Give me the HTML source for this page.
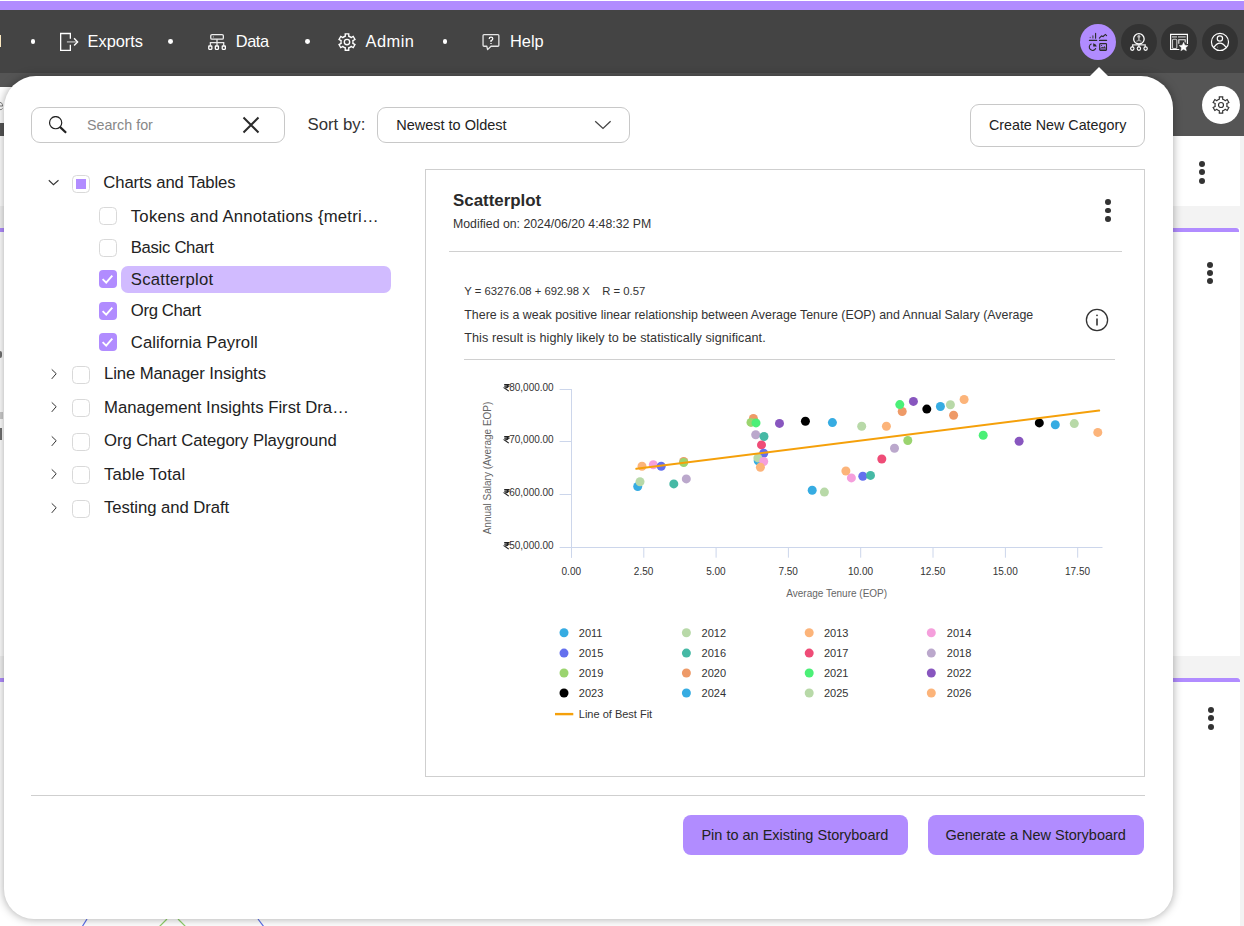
<!DOCTYPE html>
<html><head><meta charset="utf-8"><style>
html,body{margin:0;padding:0;}
body{width:1244px;height:926px;overflow:hidden;position:relative;font-family:"Liberation Sans", sans-serif;background:#fff}
.t{position:absolute;white-space:nowrap;}
</style></head><body>
<div style="position:absolute;left:0px;top:0px;width:1244px;height:926px;background:#fff"></div><div style="position:absolute;left:0px;top:1px;width:1244px;height:9px;background:#b18cff"></div><div style="position:absolute;left:0px;top:10px;width:1244px;height:63px;background:#444"></div><div style="position:absolute;left:0px;top:73px;width:1244px;height:63px;background:#555"></div><div style="position:absolute;left:0px;top:87px;width:24px;height:36px;background:#fff"></div><div style="position:absolute;left:0px;top:206px;width:1244px;height:22px;background:#f3f3f3"></div><div style="position:absolute;left:0px;top:228px;width:1239px;height:4px;background:#b18cff;border-radius:0 3px 0 0"></div><div style="position:absolute;left:0px;top:656px;width:1244px;height:22px;background:#f3f3f3"></div><div style="position:absolute;left:0px;top:678px;width:1239.5px;height:4px;background:#b18cff;border-radius:0 3px 0 0"></div><div style="position:absolute;left:1240px;top:136px;width:4px;height:790px;background:#f3f3f3"></div><div style="position:absolute;left:1199.20px;top:160.80px;width:6px;height:6px;border-radius:50%;background:#333"></div><div style="position:absolute;left:1199.20px;top:169.20px;width:6px;height:6px;border-radius:50%;background:#333"></div><div style="position:absolute;left:1199.20px;top:177.60px;width:6px;height:6px;border-radius:50%;background:#333"></div><div style="position:absolute;left:1206.90px;top:261.60px;width:6px;height:6px;border-radius:50%;background:#333"></div><div style="position:absolute;left:1206.90px;top:270.00px;width:6px;height:6px;border-radius:50%;background:#333"></div><div style="position:absolute;left:1206.90px;top:278.40px;width:6px;height:6px;border-radius:50%;background:#333"></div><div style="position:absolute;left:1208.00px;top:706.70px;width:6px;height:6px;border-radius:50%;background:#333"></div><div style="position:absolute;left:1208.00px;top:715.10px;width:6px;height:6px;border-radius:50%;background:#333"></div><div style="position:absolute;left:1208.00px;top:723.50px;width:6px;height:6px;border-radius:50%;background:#333"></div><div style="position:absolute;left:1202px;top:86px;width:38px;height:38px;background:#fff;border-radius:50%"></div><svg style="position:absolute;left:1212px;top:96px" width="18" height="18" viewBox="0 0 18 18" fill="none" stroke="#333" stroke-width="1.2"><path d="M7.30 3.25L7.30 0.90L10.70 0.90L10.70 3.25A6.0 6.0 0 0 1 13.13 4.65L15.16 3.48L16.86 6.42L14.83 7.60A6.0 6.0 0 0 1 14.83 10.40L16.86 11.58L15.16 14.52L13.13 13.35A6.0 6.0 0 0 1 10.70 14.75L10.70 17.10L7.30 17.10L7.30 14.75A6.0 6.0 0 0 1 4.87 13.35L2.84 14.52L1.14 11.58L3.17 10.40A6.0 6.0 0 0 1 3.17 7.60L1.14 6.42L2.84 3.48L4.87 4.65A6.0 6.0 0 0 1 7.30 3.25Z"/><circle cx="9" cy="9" r="2.5"/></svg><svg style="position:absolute;left:-4px;top:101px" width="8" height="10"><path d="M1 5H6.8M6.6 5C6.6 2.5 5.3 1.5 4 1.5S1.2 2.5 1.2 5 2.6 8.6 4.2 8.6 6.2 8 6.6 7.4" fill="none" stroke="#777" stroke-width="1"/></svg><div style="position:absolute;left:0px;top:351px;width:2px;height:7px;background:#333;border-radius:0 4px 4px 0;opacity:.7"></div><div style="position:absolute;left:0px;top:412px;width:2.5px;height:7px;background:#999;opacity:.5"></div><div style="position:absolute;left:0px;top:428px;width:1.8px;height:12px;background:#333;opacity:.7"></div><svg style="position:absolute;left:0;top:900px" width="400" height="26"><g stroke-width="1.2" fill="none"><path d="M87 19 L82 27" stroke="#5a6ee8"/><path d="M167 19 L159 27" stroke="#8fcf6a"/><path d="M178 19 L186 27" stroke="#8fcf6a"/><path d="M258 19 L264 27" stroke="#5a6ee8"/></g></svg><div style="position:absolute;left:30.60px;top:38.90px;width:4.8px;height:4.8px;border-radius:50%;background:#fff"></div><div style="position:absolute;left:168.00px;top:38.90px;width:4.8px;height:4.8px;border-radius:50%;background:#fff"></div><div style="position:absolute;left:305.00px;top:38.90px;width:4.8px;height:4.8px;border-radius:50%;background:#fff"></div><div style="position:absolute;left:442.50px;top:38.90px;width:4.8px;height:4.8px;border-radius:50%;background:#fff"></div><div class="t" style="left:87.50px;top:30.52px;font-size:16.4px;line-height:21px;color:#fff;font-weight:400;">Exports</div><div class="t" style="left:235.80px;top:30.52px;font-size:16.4px;line-height:21px;color:#fff;font-weight:400;letter-spacing:-0.45px">Data</div><div class="t" style="left:365.60px;top:30.52px;font-size:16.4px;line-height:21px;color:#fff;font-weight:400;letter-spacing:0.45px">Admin</div><div class="t" style="left:510.00px;top:30.52px;font-size:16.4px;line-height:21px;color:#fff;font-weight:400;">Help</div><div style="position:absolute;left:0px;top:35px;width:1.2px;height:12px;background:#fbe8c0"></div><svg style="position:absolute;left:59px;top:32px" width="21" height="21" viewBox="0 0 21 21" fill="none" stroke="#fff" stroke-width="1.3"><path d="M11.35 6.8V1.5H1.65V18.35H11.35V12.8"/><path d="M7.9 9.9H17.6" stroke="#b0b0b0" stroke-width="1.4"/><path d="M15.1 6.3L18.6 9.9L15.1 13.5" stroke-width="1.4"/></svg><svg style="position:absolute;left:206px;top:32px" width="22" height="20" viewBox="0 0 22 20" fill="none" stroke="#fff" stroke-width="1.3"><rect x="4.75" y="2.55" width="12.6" height="4.65" rx="1.3" stroke="#eee"/><rect x="6.9" y="4.1" width="1" height="1.6" fill="#999" stroke="none"/><path d="M11 7.2V10.7M4.4 13.8V10.7H17.7V13.8M11 10.7V13.8" stroke="#e8e8e8"/><rect x="2.75" y="14" width="3.1" height="3.35" rx="0.5"/><rect x="9.35" y="14" width="3.1" height="3.35" rx="0.5"/><rect x="16.25" y="14" width="3.1" height="3.35" rx="0.5"/></svg><svg style="position:absolute;left:338px;top:32.8px" width="18" height="18" viewBox="0 0 18 18" fill="none" stroke="#fff" stroke-width="1.35"><path d="M7.25 3.26L7.25 0.80L10.75 0.80L10.75 3.26A6.0 6.0 0 0 1 13.10 4.61L15.23 3.38L16.98 6.42L14.85 7.65A6.0 6.0 0 0 1 14.85 10.35L16.98 11.58L15.23 14.62L13.10 13.39A6.0 6.0 0 0 1 10.75 14.74L10.75 17.20L7.25 17.20L7.25 14.74A6.0 6.0 0 0 1 4.90 13.39L2.77 14.62L1.02 11.58L3.15 10.35A6.0 6.0 0 0 1 3.15 7.65L1.02 6.42L2.77 3.38L4.90 4.61A6.0 6.0 0 0 1 7.25 3.26Z"/><circle cx="9" cy="9" r="2.7"/></svg><svg style="position:absolute;left:481px;top:32px" width="20" height="20" viewBox="0 0 20 20" fill="none" stroke="#e6e6e6" stroke-width="1.3"><path d="M2.05 3.5Q2.05 2.55 3 2.55H16.9Q17.85 2.55 17.85 3.5V13.3Q17.85 14.25 16.9 14.25H10L6.6 17.6L5.8 14.25H3Q2.05 14.25 2.05 13.3Z" stroke-linejoin="round"/><path d="M8.2 6.9Q8.2 5.1 10 5.1Q11.8 5.1 11.8 6.8Q11.8 8 10 8.6V9.9" stroke="#fff" stroke-width="1.25"/><path d="M9.2 11.5H10.8" stroke="#ddd" stroke-width="1.1"/></svg><div style="position:absolute;left:1080px;top:24px;width:36px;height:36px;background:#b18cff;border-radius:50%"></div><div style="position:absolute;left:1121px;top:24px;width:36px;height:36px;background:#333;border-radius:50%"></div><div style="position:absolute;left:1161px;top:24px;width:36px;height:36px;background:#333;border-radius:50%"></div><div style="position:absolute;left:1202px;top:24px;width:36px;height:36px;background:#333;border-radius:50%"></div><svg style="position:absolute;left:1088px;top:32px" width="20" height="20" viewBox="0 0 20 20" fill="none" stroke="#2b2b2b" stroke-linecap="round"><path d="M1.4 8.4H8.7M11.5 8.4H18.6" stroke-width="1.15"/><path d="M2.2 5.2V5.6" stroke-width="1.1" stroke="#555"/><path d="M4.9 3.8V6" stroke-width="1.1" stroke="#444"/><path d="M7.6 1.4V6.3" stroke-width="1.1"/><path d="M11.4 6.2L13.5 3.9L15.1 4.5L17.4 2.4L18.6 3.6" stroke-width="1.1"/><path d="M3.18 12.06A3.35 3.35 0 1 0 7.64 16.52" stroke-width="1.1"/><path d="M5.2 11.3V14.5H8.8Q8.4 12 5.2 11.3Z" fill="#2b2b2b" stroke="none"/><rect x="11.7" y="11.6" width="6.8" height="6.8" rx="0.6" stroke-width="1.1"/><path d="M12.3 17H18" stroke-width="0.9"/><circle cx="13.6" cy="13.5" r="0.6" fill="#2b2b2b" stroke="none"/><path d="M12.4 16.1L14.3 14.8L15.3 15.4L16.4 13.9L17.8 16.1Z" fill="#3a3a3a" stroke="none"/></svg><svg style="position:absolute;left:1129px;top:32px" width="20" height="20" viewBox="0 0 20 20" fill="none" stroke="#fff" stroke-width="1.3"><circle cx="9.9" cy="6.9" r="5.25"/><circle cx="9.9" cy="4.6" r="1.5" fill="#bdbdbd" stroke="none"/><path d="M9.9 5.8V8.3" stroke="#aaa" stroke-width="1.6"/><path d="M7.4 9.2Q9.9 7.9 12.4 9.2" stroke="#bbb" stroke-width="0.9"/><path d="M7.3 11.2Q9.9 13.3 12.5 11.2" stroke-width="1.6"/><path d="M3.6 15V12.9H16.2V15M9.9 12.2V15" stroke="#e6e6e6"/><circle cx="3.3" cy="16.6" r="1.7" stroke-width="1.15"/><circle cx="9.9" cy="16.6" r="1.7" stroke-width="1.15"/><circle cx="16.6" cy="16.6" r="1.7" stroke-width="1.15"/></svg><svg style="position:absolute;left:1169px;top:33px" width="21" height="19" viewBox="0 0 21 19" fill="none" stroke="#fff" stroke-width="1.2"><path d="M10.3 16.5H1.6V1.36H18.4V11"/><path d="M3 3.9H8M9 3.9H16.7" stroke="#9a9a9a" stroke-width="1.7"/><rect x="3.5" y="6.3" width="4.3" height="9.2" rx="1" stroke="#c8c8c8" stroke-width="1.1"/><path d="M9.8 10.8V6.8H16.2V9.6" stroke="#eee" stroke-width="1.1"/><path d="M14.60 8.00L16.30 11.65L20.31 12.15L17.36 14.90L18.13 18.85L14.60 16.90L11.07 18.85L11.84 14.90L8.89 12.15L12.90 11.65Z" fill="#333" stroke="none"/><path d="M14.60 9.30L15.89 12.22L19.07 12.55L16.69 14.68L17.36 17.80L14.60 16.20L11.84 17.80L12.51 14.68L10.13 12.55L13.31 12.22Z" fill="#fff" stroke="#fff" stroke-width="0.4" stroke-linejoin="round"/></svg><svg style="position:absolute;left:1210px;top:32px" width="20" height="20" viewBox="0 0 20 20" fill="none" stroke="#fff" stroke-width="1.2"><circle cx="9.98" cy="9.93" r="8.55"/><circle cx="9.9" cy="6.55" r="2.65"/><path d="M3.9 15.3Q9.9 6.9 16.1 15.3"/><circle cx="7.6" cy="15" r="0.55" fill="#aaa" stroke="none"/></svg><div style="position:absolute;left:4px;top:76px;width:1168.7px;height:843px;background:#fff;border-radius:32px 32px 30px 30px;box-shadow:0 0 10px rgba(0,0,0,0.35)"></div><svg style="position:absolute;left:1089px;top:66px" width="20" height="11"><path d="M0.5 10.5L10 1L19.5 10.5Z" fill="#fff"/></svg><div style="position:absolute;left:31px;top:107px;width:254px;height:36px;box-sizing:border-box;border:1px solid #c8c8c8;border-radius:9px;background:#fff"></div><svg style="position:absolute;left:47px;top:116px" width="21" height="19" viewBox="0 0 21 19" fill="none" stroke="#222" stroke-width="1.2"><circle cx="8.65" cy="6.65" r="6.1"/><path d="M12.9 10.9L19.1 16.8" stroke-width="2.2"/></svg><div class="t" style="left:86.90px;top:115.55px;font-size:14.3px;line-height:19px;color:#888;font-weight:400;">Search for</div><svg style="position:absolute;left:242px;top:116px" width="18" height="18" viewBox="0 0 18 18" stroke="#2b2b2b" stroke-width="2"><path d="M1.5 1.5L16.5 16.5M16.5 1.5L1.5 16.5"/></svg><div class="t" style="left:307.50px;top:113.98px;font-size:16.8px;line-height:22px;color:#333;font-weight:400;">Sort by:</div><div style="position:absolute;left:377px;top:107px;width:253px;height:36px;box-sizing:border-box;border:1px solid #c8c8c8;border-radius:9px;background:#fff"></div><div class="t" style="left:396.20px;top:116.28px;font-size:14.5px;line-height:19px;color:#222;font-weight:400;">Newest to Oldest</div><svg style="position:absolute;left:594px;top:120px" width="18" height="10" viewBox="0 0 18 10" fill="none" stroke="#454545" stroke-width="1.3"><path d="M1.2 1.2L9 8.4L16.6 1.2"/></svg><div style="position:absolute;left:970px;top:104px;width:175px;height:43px;box-sizing:border-box;border:1px solid #c8c8c8;border-radius:9px;background:#fff"></div><div class="t" style="left:988.90px;top:116.25px;font-size:14.3px;line-height:19px;color:#222;font-weight:400;">Create New Category</div><svg style="position:absolute;left:48px;top:179px" width="12" height="8" viewBox="0 0 12 8" fill="none" stroke="#333" stroke-width="1.05"><path d="M0.8 1.25L5.45 5.7L10.5 1.25"/></svg><div style="position:absolute;left:72px;top:175px;width:18px;height:18px;box-sizing:border-box;border:1px solid #d9d9d9;border-radius:4.5px;background:#fff"></div><div style="position:absolute;left:76px;top:179px;width:10px;height:10px;background:#b18cff"></div><div class="t" style="left:103.30px;top:171.91px;font-size:16.7px;line-height:22px;color:#222;font-weight:400;letter-spacing:-0.12px">Charts and Tables</div><div style="position:absolute;left:99px;top:207px;width:18px;height:18px;box-sizing:border-box;border:1px solid #d9d9d9;border-radius:4.5px;background:#fff"></div><div class="t" style="left:130.80px;top:205.81px;font-size:16.7px;line-height:22px;color:#222;font-weight:400;letter-spacing:0.23px">Tokens and Annotations {metri…</div><div style="position:absolute;left:99px;top:239px;width:18px;height:18px;box-sizing:border-box;border:1px solid #d9d9d9;border-radius:4.5px;background:#fff"></div><div class="t" style="left:130.80px;top:236.61px;font-size:16.7px;line-height:22px;color:#222;font-weight:400;letter-spacing:-0.31px">Basic Chart</div><div style="position:absolute;left:121px;top:266px;width:270px;height:27px;background:#d1bbff;border-radius:7px"></div><div style="position:absolute;left:99px;top:270px;width:18px;height:18px;border-radius:4px;background:#b18cff"></div><svg style="position:absolute;left:99px;top:270px" width="18" height="18" viewBox="0 0 18 18" fill="none" stroke="#fff" stroke-width="1.9"><path d="M3.6 9.1L7.2 12.6L13.3 5.6"/></svg><div class="t" style="left:130.80px;top:268.81px;font-size:16.7px;line-height:22px;color:#222;font-weight:400;letter-spacing:0.25px">Scatterplot</div><div style="position:absolute;left:99px;top:302px;width:18px;height:18px;border-radius:4px;background:#b18cff"></div><svg style="position:absolute;left:99px;top:302px" width="18" height="18" viewBox="0 0 18 18" fill="none" stroke="#fff" stroke-width="1.9"><path d="M3.6 9.1L7.2 12.6L13.3 5.6"/></svg><div class="t" style="left:130.80px;top:300.11px;font-size:16.7px;line-height:22px;color:#222;font-weight:400;letter-spacing:-0.35px">Org Chart</div><div style="position:absolute;left:99px;top:333px;width:18px;height:18px;border-radius:4px;background:#b18cff"></div><svg style="position:absolute;left:99px;top:333px" width="18" height="18" viewBox="0 0 18 18" fill="none" stroke="#fff" stroke-width="1.9"><path d="M3.6 9.1L7.2 12.6L13.3 5.6"/></svg><div class="t" style="left:130.80px;top:332.11px;font-size:16.7px;line-height:22px;color:#222;font-weight:400;letter-spacing:0.04px">California Payroll</div><svg style="position:absolute;left:49.5px;top:367.8px" width="8" height="12" viewBox="0 0 8 12" fill="none" stroke="#333" stroke-width="1.0"><path d="M1.73 1.4L6.2 5.65L1.73 10.9"/></svg><div style="position:absolute;left:72px;top:366px;width:18px;height:18px;box-sizing:border-box;border:1px solid #d9d9d9;border-radius:4.5px;background:#fff"></div><div class="t" style="left:104.00px;top:362.91px;font-size:16.7px;line-height:22px;color:#222;font-weight:400;letter-spacing:-0.11px">Line Manager Insights</div><svg style="position:absolute;left:49.5px;top:400.6px" width="8" height="12" viewBox="0 0 8 12" fill="none" stroke="#333" stroke-width="1.0"><path d="M1.73 1.4L6.2 5.65L1.73 10.9"/></svg><div style="position:absolute;left:72px;top:399px;width:18px;height:18px;box-sizing:border-box;border:1px solid #d9d9d9;border-radius:4.5px;background:#fff"></div><div class="t" style="left:104.00px;top:397.11px;font-size:16.7px;line-height:22px;color:#222;font-weight:400;letter-spacing:0px">Management Insights First Dra…</div><svg style="position:absolute;left:49.5px;top:434.7px" width="8" height="12" viewBox="0 0 8 12" fill="none" stroke="#333" stroke-width="1.0"><path d="M1.73 1.4L6.2 5.65L1.73 10.9"/></svg><div style="position:absolute;left:72px;top:433px;width:18px;height:18px;box-sizing:border-box;border:1px solid #d9d9d9;border-radius:4.5px;background:#fff"></div><div class="t" style="left:104.00px;top:429.71px;font-size:16.7px;line-height:22px;color:#222;font-weight:400;letter-spacing:-0.07px">Org Chart Category Playground</div><svg style="position:absolute;left:49.5px;top:467.7px" width="8" height="12" viewBox="0 0 8 12" fill="none" stroke="#333" stroke-width="1.0"><path d="M1.73 1.4L6.2 5.65L1.73 10.9"/></svg><div style="position:absolute;left:72px;top:466px;width:18px;height:18px;box-sizing:border-box;border:1px solid #d9d9d9;border-radius:4.5px;background:#fff"></div><div class="t" style="left:104.00px;top:463.71px;font-size:16.7px;line-height:22px;color:#222;font-weight:400;letter-spacing:0.17px">Table Total</div><svg style="position:absolute;left:49.5px;top:501.6px" width="8" height="12" viewBox="0 0 8 12" fill="none" stroke="#333" stroke-width="1.0"><path d="M1.73 1.4L6.2 5.65L1.73 10.9"/></svg><div style="position:absolute;left:72px;top:500px;width:18px;height:18px;box-sizing:border-box;border:1px solid #d9d9d9;border-radius:4.5px;background:#fff"></div><div class="t" style="left:104.00px;top:496.51px;font-size:16.7px;line-height:22px;color:#222;font-weight:400;letter-spacing:-0.06px">Testing and Draft</div><div style="position:absolute;left:425px;top:169px;width:720px;height:608px;box-sizing:border-box;border:1px solid #cfcfcf;background:#fff"></div><div class="t" style="left:453.00px;top:189.64px;font-size:16.9px;line-height:22px;color:#2a2a2a;font-weight:700;">Scatterplot</div><div class="t" style="left:453.00px;top:216.44px;font-size:12.3px;line-height:16px;color:#333;font-weight:400;">Modified on: 2024/06/20 4:48:32 PM</div><div style="position:absolute;left:1105.10px;top:198.90px;width:5.8px;height:5.8px;border-radius:50%;background:#333"></div><div style="position:absolute;left:1105.10px;top:207.50px;width:5.8px;height:5.8px;border-radius:50%;background:#333"></div><div style="position:absolute;left:1105.10px;top:216.10px;width:5.8px;height:5.8px;border-radius:50%;background:#333"></div><div style="position:absolute;left:449px;top:251px;width:673px;height:1px;background:#d0d0d0"></div><div class="t" style="left:464.30px;top:283.88px;font-size:11.3px;line-height:15px;color:#333;font-weight:400;">Y = 63276.08 + 692.98 X &nbsp;&nbsp; R = 0.57</div><div class="t" style="left:464.30px;top:307.40px;font-size:12.4px;line-height:16px;color:#333;font-weight:400;">There is a weak positive linear relationship between Average Tenure (EOP) and Annual Salary (Average</div><div class="t" style="left:464.30px;top:329.93px;font-size:12.6px;line-height:16px;color:#333;font-weight:400;letter-spacing:0.065px">This result is highly likely to be statistically significant.</div><svg style="position:absolute;left:1085px;top:308px" width="24" height="24" viewBox="0 0 24 24" fill="none" stroke="#333" stroke-width="1.3"><circle cx="12" cy="12" r="10.6"/><path d="M12 10.5V17.5" stroke-width="1.6"/><circle cx="12" cy="7.3" r="0.9" fill="#333" stroke="none"/></svg><div style="position:absolute;left:464px;top:359px;width:651px;height:1px;background:#d0d0d0"></div><svg style="position:absolute;left:0;top:0" width="1244" height="926" font-family="Liberation Sans, sans-serif"><path d="M571.5 389V557.7M559.6 389.5H571.5M559.6 441.5H571.5M559.6 494.5H571.5M559.6 547.5H1102.5" stroke="#ccd6eb" stroke-width="1" fill="none"/><path d="M571.5 547.5V557.7M643.8 547.5V557.7M716.1 547.5V557.7M788.4 547.5V557.7M860.7 547.5V557.7M933.0 547.5V557.7M1005.4 547.5V557.7M1077.7 547.5V557.7" stroke="#ccd6eb" stroke-width="1" fill="none"/><text x="553.7" y="391.10" font-size="10" fill="#333" text-anchor="end">80,000.00</text><path d="M504.20 384.69H509.58M504.20 386.26H509.58M504.50 384.69C509.31 384.69 509.31 387.99 504.50 387.99L508.77 391.10" stroke="#222" stroke-width="1.15" fill="none"/><text x="553.7" y="443.10" font-size="10" fill="#333" text-anchor="end">70,000.00</text><path d="M504.20 436.69H509.58M504.20 438.26H509.58M504.50 436.69C509.31 436.69 509.31 439.99 504.50 439.99L508.77 443.10" stroke="#222" stroke-width="1.15" fill="none"/><text x="553.7" y="496.10" font-size="10" fill="#333" text-anchor="end">60,000.00</text><path d="M504.20 489.69H509.58M504.20 491.26H509.58M504.50 489.69C509.31 489.69 509.31 492.99 504.50 492.99L508.77 496.10" stroke="#222" stroke-width="1.15" fill="none"/><text x="553.7" y="549.10" font-size="10" fill="#333" text-anchor="end">50,000.00</text><path d="M504.20 542.69H509.58M504.20 544.26H509.58M504.50 542.69C509.31 542.69 509.31 545.99 504.50 545.99L508.77 549.10" stroke="#222" stroke-width="1.15" fill="none"/><text x="571.3" y="574.9" font-size="10" fill="#333" text-anchor="middle">0.00</text><text x="643.6" y="574.9" font-size="10" fill="#333" text-anchor="middle">2.50</text><text x="715.9" y="574.9" font-size="10" fill="#333" text-anchor="middle">5.00</text><text x="788.2" y="574.9" font-size="10" fill="#333" text-anchor="middle">7.50</text><text x="860.5" y="574.9" font-size="10" fill="#333" text-anchor="middle">10.00</text><text x="932.8" y="574.9" font-size="10" fill="#333" text-anchor="middle">12.50</text><text x="1005.2" y="574.9" font-size="10" fill="#333" text-anchor="middle">15.00</text><text x="1077.5" y="574.9" font-size="10" fill="#333" text-anchor="middle">17.50</text><text x="836.7" y="597.2" font-size="10" fill="#666" text-anchor="middle">Average Tenure (EOP)</text><text transform="translate(491,468) rotate(-90)" x="0" y="0" font-size="10" fill="#666" text-anchor="middle">Annual Salary (Average EOP)</text><circle cx="637.7" cy="486.5" r="4.5" fill="#36ace2"/><circle cx="640" cy="481.8" r="4.5" fill="#b8d9a8"/><circle cx="642.0" cy="466.3" r="4.5" fill="#fcb47a"/><circle cx="653.3" cy="464.8" r="4.5" fill="#f59fdc"/><circle cx="661.2" cy="466.3" r="4.5" fill="#6470ee"/><circle cx="683.7" cy="461.5" r="4.5" fill="#ee9a68"/><circle cx="683.7" cy="462.5" r="4.5" fill="#9bd46f"/><circle cx="673.8" cy="483.9" r="4.5" fill="#46b9a5"/><circle cx="686.3" cy="478.9" r="4.5" fill="#bba8cc"/><circle cx="753.4" cy="418.4" r="4.5" fill="#ee9a68"/><circle cx="751" cy="422.4" r="4.5" fill="#9bd46f"/><circle cx="756" cy="422.9" r="4.5" fill="#4bf077"/><circle cx="779.5" cy="423.4" r="4.5" fill="#8856bf"/><circle cx="755.7" cy="434.7" r="4.5" fill="#bba8cc"/><circle cx="764" cy="436.5" r="4.5" fill="#46b9a5"/><circle cx="761.5" cy="444.9" r="4.5" fill="#ef4c77"/><circle cx="763.7" cy="453.2" r="4.5" fill="#6470ee"/><circle cx="758.2" cy="460.8" r="4.5" fill="#36ace2"/><circle cx="757.9" cy="457.9" r="4.5" fill="#b8d9a8"/><circle cx="763.7" cy="461.5" r="4.5" fill="#f59fdc"/><circle cx="760.4" cy="467.3" r="4.5" fill="#fcb47a"/><circle cx="805.4" cy="421.2" r="4.5" fill="#000000"/><circle cx="832.4" cy="422.6" r="4.5" fill="#36ace2"/><circle cx="861.7" cy="426.2" r="4.5" fill="#b8d9a8"/><circle cx="886.4" cy="426.2" r="4.5" fill="#fcb47a"/><circle cx="902.2" cy="411.5" r="4.5" fill="#ee9a68"/><circle cx="899.8" cy="404.6" r="4.5" fill="#4bf077"/><circle cx="913.4" cy="401.4" r="4.5" fill="#8856bf"/><circle cx="926.8" cy="409.1" r="4.5" fill="#000000"/><circle cx="940.4" cy="406.5" r="4.5" fill="#36ace2"/><circle cx="950.4" cy="404.8" r="4.5" fill="#b8d9a8"/><circle cx="964.1" cy="399.5" r="4.5" fill="#fcb47a"/><circle cx="953.6" cy="415.2" r="4.5" fill="#ee9a68"/><circle cx="907.8" cy="440.5" r="4.5" fill="#9bd46f"/><circle cx="894.5" cy="448.2" r="4.5" fill="#bba8cc"/><circle cx="881.8" cy="459" r="4.5" fill="#ef4c77"/><circle cx="845.9" cy="471" r="4.5" fill="#fcb47a"/><circle cx="851.4" cy="477.9" r="4.5" fill="#f59fdc"/><circle cx="862.8" cy="476.2" r="4.5" fill="#6470ee"/><circle cx="870.5" cy="475.4" r="4.5" fill="#46b9a5"/><circle cx="812.2" cy="490.3" r="4.5" fill="#36ace2"/><circle cx="824.4" cy="492.1" r="4.5" fill="#b8d9a8"/><circle cx="983.2" cy="435.3" r="4.5" fill="#4bf077"/><circle cx="1019.1" cy="441.3" r="4.5" fill="#8856bf"/><circle cx="1039.3" cy="422.9" r="4.5" fill="#000000"/><circle cx="1055.3" cy="424.8" r="4.5" fill="#36ace2"/><circle cx="1074.3" cy="423.6" r="4.5" fill="#b8d9a8"/><circle cx="1097.8" cy="432.4" r="4.5" fill="#fcb47a"/><path d="M636.3 468.8L1099.2 410.6" stroke="#f5a00a" stroke-width="2" stroke-linecap="round"/><circle cx="564" cy="632.8" r="4.5" fill="#36ace2"/><text x="578.8" y="636.8" font-size="11" fill="#333">2011</text><circle cx="686.4" cy="632.8" r="4.5" fill="#b8d9a8"/><text x="701.6" y="636.8" font-size="11" fill="#333">2012</text><circle cx="809.2" cy="632.8" r="4.5" fill="#fcb47a"/><text x="824" y="636.8" font-size="11" fill="#333">2013</text><circle cx="931.3" cy="632.8" r="4.5" fill="#f59fdc"/><text x="946.8" y="636.8" font-size="11" fill="#333">2014</text><circle cx="564" cy="653.1" r="4.5" fill="#6470ee"/><text x="578.8" y="657.1" font-size="11" fill="#333">2015</text><circle cx="686.4" cy="653.1" r="4.5" fill="#46b9a5"/><text x="701.6" y="657.1" font-size="11" fill="#333">2016</text><circle cx="809.2" cy="653.1" r="4.5" fill="#ef4c77"/><text x="824" y="657.1" font-size="11" fill="#333">2017</text><circle cx="931.3" cy="653.1" r="4.5" fill="#bba8cc"/><text x="946.8" y="657.1" font-size="11" fill="#333">2018</text><circle cx="564" cy="673" r="4.5" fill="#9bd46f"/><text x="578.8" y="677" font-size="11" fill="#333">2019</text><circle cx="686.4" cy="673" r="4.5" fill="#ee9a68"/><text x="701.6" y="677" font-size="11" fill="#333">2020</text><circle cx="809.2" cy="673" r="4.5" fill="#4bf077"/><text x="824" y="677" font-size="11" fill="#333">2021</text><circle cx="931.3" cy="673" r="4.5" fill="#8856bf"/><text x="946.8" y="677" font-size="11" fill="#333">2022</text><circle cx="564" cy="693" r="4.5" fill="#000000"/><text x="578.8" y="697" font-size="11" fill="#333">2023</text><circle cx="686.4" cy="693" r="4.5" fill="#36ace2"/><text x="701.6" y="697" font-size="11" fill="#333">2024</text><circle cx="809.2" cy="693" r="4.5" fill="#b8d9a8"/><text x="824" y="697" font-size="11" fill="#333">2025</text><circle cx="931.3" cy="693" r="4.5" fill="#fcb47a"/><text x="946.8" y="697" font-size="11" fill="#333">2026</text><path d="M555 714.1H573.3" stroke="#f5a00a" stroke-width="2.4"/><text x="578.8" y="718.1" font-size="11" fill="#333">Line of Best Fit</text></svg><div style="position:absolute;left:31px;top:795px;width:1114px;height:1px;background:#cfcfcf"></div><div style="position:absolute;left:683px;top:815px;width:225px;height:40px;background:#b18cff;border-radius:8px"></div><div class="t" style="left:701.40px;top:825.98px;font-size:14.5px;line-height:19px;color:#222;font-weight:400;">Pin to an Existing Storyboard</div><div style="position:absolute;left:928px;top:815px;width:216px;height:40px;background:#b18cff;border-radius:8px"></div><div class="t" style="left:945.40px;top:825.98px;font-size:14.5px;line-height:19px;color:#222;font-weight:400;">Generate a New Storyboard</div>
</body></html>
